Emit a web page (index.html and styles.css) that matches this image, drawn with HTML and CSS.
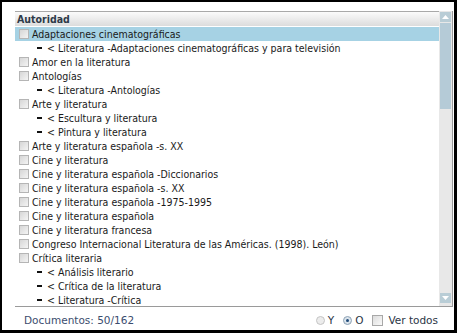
FILE: index.html
```html
<!DOCTYPE html>
<html>
<head>
<meta charset="utf-8">
<link rel="stylesheet" href="styles.css">
</head>
<body>
<div class="frame">
  <div class="panel">
    <div class="list">
      <div class="head">Autoridad</div>
      <div class="rows">
        <div class="row sel"><span class="cb"></span>Adaptaciones cinematográficas</div>
        <div class="row sub"><span class="dash"></span>&lt; Literatura -Adaptaciones cinematográficas y para televisión</div>
        <div class="row"><span class="cb"></span>Amor en la literatura</div>
        <div class="row"><span class="cb"></span>Antologías</div>
        <div class="row sub"><span class="dash"></span>&lt; Literatura -Antologías</div>
        <div class="row"><span class="cb"></span>Arte y literatura</div>
        <div class="row sub"><span class="dash"></span>&lt; Escultura y literatura</div>
        <div class="row sub"><span class="dash"></span>&lt; Pintura y literatura</div>
        <div class="row"><span class="cb"></span>Arte y literatura española -s. XX</div>
        <div class="row"><span class="cb"></span>Cine y literatura</div>
        <div class="row"><span class="cb"></span>Cine y literatura española -Diccionarios</div>
        <div class="row"><span class="cb"></span>Cine y literatura española -s. XX</div>
        <div class="row"><span class="cb"></span>Cine y literatura española -1975-1995</div>
        <div class="row"><span class="cb"></span>Cine y literatura española</div>
        <div class="row"><span class="cb"></span>Cine y literatura francesa</div>
        <div class="row"><span class="cb"></span>Congreso Internacional Literatura de las Américas. (1998). León)</div>
        <div class="row"><span class="cb"></span>Crítica literaria</div>
        <div class="row sub"><span class="dash"></span>&lt; Análisis literario</div>
        <div class="row sub"><span class="dash"></span>&lt; Crítica de la literatura</div>
        <div class="row sub"><span class="dash"></span>&lt; Literatura -Crítica</div>
      </div>
    </div>
    <div class="scroll">
      <div class="sbtn"><svg width="7" height="4" viewBox="0 0 7 4"><path d="M0 4 L3.5 0 L7 4 Z" fill="#fff"/></svg></div>
      <div class="track"><div class="thumb"></div></div>
      <div class="sbtn"><svg width="7" height="4" viewBox="0 0 7 4"><path d="M0 0 L3.5 4 L7 0 Z" fill="#fff"/></svg></div>
    </div>
  </div>
  <div class="foot">
    <span class="docs">Documentos: 50/162</span>
    <div class="opts">
      <label class="opt"><span class="radio"></span>Y</label>
      <label class="opt"><span class="radio on"></span>O</label>
      <label class="opt"><span class="cb2"></span>Ver todos</label>
    </div>
  </div>
</div>
</body>
</html>
```
FILE: styles.css
```css
html, body { margin: 0; padding: 0; background: #fff; }
.frame {
  width: 457px; height: 333px; box-sizing: border-box;
  border: 2px solid #000; border-right-width: 3px; border-bottom-width: 3px;
  padding: 9px 0 0 13px;
  font-family: "DejaVu Sans Condensed", "DejaVu Sans", sans-serif;
  font-size: 10.5px; color: #1a1a1a;
  overflow: hidden;
}
.panel {
  width: 438px; height: 296px; display: flex;
  border-bottom: 1px solid #9a9a9a; box-sizing: border-box;
}
.list { width: 424px; overflow: hidden; }
.head {
  height: 15px; box-sizing: border-box; line-height: 14px;
  border-top: 1px solid #a9a9a9;
  background: linear-gradient(#fbfbfb, #dcdcdc);
  font-weight: bold; color: #2e3a48; padding-left: 2px;
}
.rows { padding-top: 1px; }
.row { height: 14px; line-height: 14px; display: flex; align-items: center; white-space: nowrap; padding-left: 4px; }
.row.sel { background: #a6d2e4; }
.row.sub { padding-left: 22px; }
.cb {
  width: 10px; height: 10px; box-sizing: border-box; margin-right: 3px;
  border: 1px solid #b5b5b5; background: linear-gradient(135deg, #d6d6d6, #f4f4f4);
  flex: none;
}
.dash { width: 5px; height: 2px; background: #111; margin-right: 5px; flex: none; }
.scroll {
  width: 14px; display: flex; flex-direction: column; box-sizing: border-box;
  border-right: 1px solid #9a9a9a; background: #e8e8e8; padding: 0 1px 2px 1px;
}
.sbtn {
  height: 10px; margin: 1px 0; background: #b9cdd6; display: flex; align-items: center; justify-content: center;
}
.track { flex: 1; }
.thumb { height: 86px; background: #b5cbd7; margin-top: 0; }
.foot {
  height: 26px; display: flex; align-items: center; justify-content: space-between;
  padding: 0 15px 0 9px; width: 438px; box-sizing: border-box;
}
.docs { color: #3b4d6e; font-family: "DejaVu Sans", sans-serif; font-size: 10.5px; }
.opts { display: flex; align-items: center; }
.opt { display: flex; align-items: center; margin-left: 9px; color: #2b3646; font-family: "DejaVu Sans", sans-serif; font-size: 10.5px; }
.radio {
  width: 9px; height: 9px; box-sizing: border-box; border-radius: 50%;
  border: 1px solid #c4c4c4; background: #ececec; margin-right: 3px; position: relative;
}
.radio.on { border-color: #8fa3b5; background: #dbe4ec; }
.radio.on::after { content: ""; position: absolute; left: 2px; top: 2px; width: 3px; height: 3px; border-radius: 50%; background: #1f4a78; }
.cb2 { width: 11px; height: 11px; box-sizing: border-box; border: 1px solid #a8a8a8; background: linear-gradient(135deg, #dcdcdc, #fafafa); margin-right: 5px; }
```
